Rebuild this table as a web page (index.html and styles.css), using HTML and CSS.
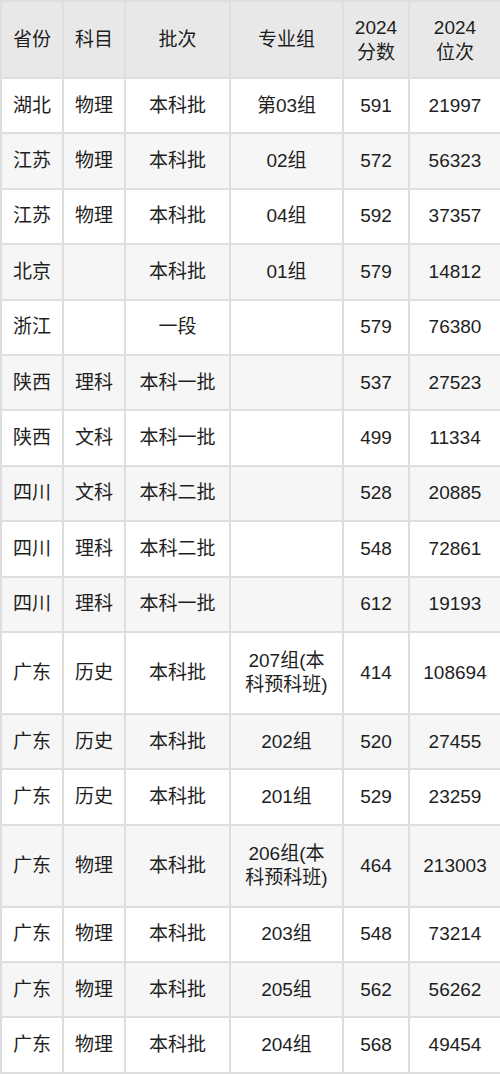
FILE: index.html
```html
<!DOCTYPE html>
<html lang="zh-CN">
<head>
<meta charset="utf-8">
<title>2024 分数位次</title>
<link rel="stylesheet" href="styles.css">
</head>
<body>
<table class="score-table">
  <colgroup>
    <col class="c1"><col class="c2"><col class="c3"><col class="c4"><col class="c5"><col class="c6">
  </colgroup>
  <thead>
    <tr class="head">
      <th>省份</th><th>科目</th><th>批次</th><th>专业组</th><th>2024<br>分数</th><th>2024<br>位次</th>
    </tr>
  </thead>
  <tbody>
    <tr><td>湖北</td><td>物理</td><td>本科批</td><td>第03组</td><td>591</td><td>21997</td></tr>
    <tr><td>江苏</td><td>物理</td><td>本科批</td><td>02组</td><td>572</td><td>56323</td></tr>
    <tr><td>江苏</td><td>物理</td><td>本科批</td><td>04组</td><td>592</td><td>37357</td></tr>
    <tr><td>北京</td><td></td><td>本科批</td><td>01组</td><td>579</td><td>14812</td></tr>
    <tr><td>浙江</td><td></td><td>一段</td><td></td><td>579</td><td>76380</td></tr>
    <tr><td>陕西</td><td>理科</td><td>本科一批</td><td></td><td>537</td><td>27523</td></tr>
    <tr><td>陕西</td><td>文科</td><td>本科一批</td><td></td><td>499</td><td>11334</td></tr>
    <tr><td>四川</td><td>文科</td><td>本科二批</td><td></td><td>528</td><td>20885</td></tr>
    <tr><td>四川</td><td>理科</td><td>本科二批</td><td></td><td>548</td><td>72861</td></tr>
    <tr><td>四川</td><td>理科</td><td>本科一批</td><td></td><td>612</td><td>19193</td></tr>
    <tr class="tall"><td>广东</td><td>历史</td><td>本科批</td><td>207组(本<br>科预科班)</td><td>414</td><td>108694</td></tr>
    <tr><td>广东</td><td>历史</td><td>本科批</td><td>202组</td><td>520</td><td>27455</td></tr>
    <tr><td>广东</td><td>历史</td><td>本科批</td><td>201组</td><td>529</td><td>23259</td></tr>
    <tr class="tall"><td>广东</td><td>物理</td><td>本科批</td><td>206组(本<br>科预科班)</td><td>464</td><td>213003</td></tr>
    <tr><td>广东</td><td>物理</td><td>本科批</td><td>203组</td><td>548</td><td>73214</td></tr>
    <tr><td>广东</td><td>物理</td><td>本科批</td><td>205组</td><td>562</td><td>56262</td></tr>
    <tr><td>广东</td><td>物理</td><td>本科批</td><td>204组</td><td>568</td><td>49454</td></tr>
  </tbody>
</table>
</body>
</html>
```

FILE: styles.css
```css
html, body {
  margin: 0;
  padding: 0;
  background: #ffffff;
}

.score-table {
  width: 500px;
  border-collapse: collapse;
  table-layout: fixed;
  font-family: "Liberation Sans", "Noto Sans CJK SC", sans-serif;
  font-size: 19px;
  line-height: 24px;
  color: #1e1e1e;
}

.c1 { width: 62px; }
.c2 { width: 62px; }
.c3 { width: 105px; }
.c4 { width: 113px; }
.c5 { width: 66px; }
.c6 { width: 92px; }

.score-table th,
.score-table td {
  border: 2px solid #dedede;
  text-align: center;
  vertical-align: middle;
  padding: 0 2px;
  font-weight: normal;
}

.score-table th {
  line-height: 25px;
}

.head {
  height: 77px;
  background: #e8e8e8;
}

.score-table tbody tr {
  height: 55.4px;
  background: #ffffff;
}

.score-table tbody tr:nth-child(even) {
  background: #f6f6f6;
}

.score-table tbody tr.tall {
  height: 82px;
}
```
